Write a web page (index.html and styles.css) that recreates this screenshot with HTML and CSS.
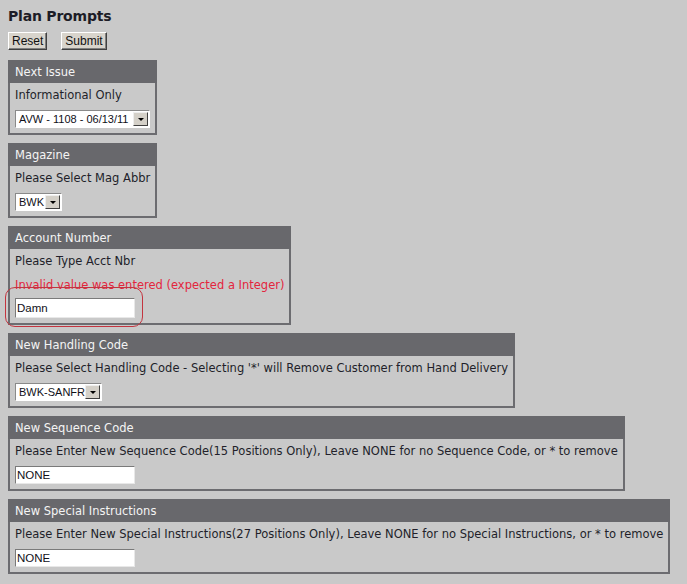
FILE: index.html
```html
<!DOCTYPE html>
<html>
<head>
<meta charset="utf-8">
<title>Plan Prompts</title>
<link rel="stylesheet" href="styles.css">
</head>
<body>
<h1 class="title">Plan Prompts</h1>
<div class="actions">
  <button class="btn" type="button">Reset</button>
  <button class="btn" type="button">Submit</button>
</div>
<div class="panels">
  <div class="panel">
    <div class="panel-head">Next Issue</div>
    <div class="panel-body">
      <div class="prompt">Informational Only</div>
      <div class="select w-issue"><span class="select-value">AVW - 1108 - 06/13/11</span><span class="select-btn"><span class="arrow"></span></span></div>
    </div>
  </div>
  <div class="panel">
    <div class="panel-head">Magazine</div>
    <div class="panel-body">
      <div class="prompt">Please Select Mag Abbr</div>
      <div class="select w-mag"><span class="select-value">BWK</span><span class="select-btn"><span class="arrow"></span></span></div>
    </div>
  </div>
  <div class="panel panel-error">
    <div class="panel-head">Account Number</div>
    <div class="panel-body">
      <div class="prompt">Please Type Acct Nbr</div>
      <div class="error">Invalid value was entered (expected a Integer)</div>
      <input class="field field-tall" type="text" value="Damn">
    </div>
    <div class="highlight"></div>
  </div>
  <div class="panel">
    <div class="panel-head">New Handling Code</div>
    <div class="panel-body">
      <div class="prompt">Please Select Handling Code - Selecting '*' will Remove Customer from Hand Delivery</div>
      <div class="select w-hand"><span class="select-value">BWK-SANFR</span><span class="select-btn"><span class="arrow"></span></span></div>
    </div>
  </div>
  <div class="panel">
    <div class="panel-head">New Sequence Code</div>
    <div class="panel-body">
      <div class="prompt">Please Enter New Sequence Code(15 Positions Only), Leave NONE for no Sequence Code, or * to remove</div>
      <input class="field" type="text" value="NONE">
    </div>
  </div>
  <div class="panel">
    <div class="panel-head">New Special Instructions</div>
    <div class="panel-body">
      <div class="prompt">Please Enter New Special Instructions(27 Positions Only), Leave NONE for no Special Instructions, or * to remove</div>
      <input class="field" type="text" value="NONE">
    </div>
  </div>
</div>
</body>
</html>
```

FILE: styles.css
```css
html, body {
  margin: 0;
  background: #c9c9c9;
}
body {
  padding: 7px 8px 8px 8px;
  font-family: "DejaVu Sans", Verdana, sans-serif;
  font-size: 11.5px;
  color: #221f2a;
}
.title {
  margin: 0;
  font-size: 14px;
  letter-spacing: -0.2px;
  line-height: 18px;
  font-weight: bold;
  color: #1c1c26;
}
.actions {
  display: flex;
  gap: 14px;
  margin-top: 7px;
}
.btn {
  font-family: "Liberation Sans", Arial, sans-serif;
  font-size: 12px;
  height: 18px;
  padding: 0 3px;
  margin: 0;
  line-height: 14px;
  color: #111;
  background: #d8d4cc;
  border: 1px solid;
  border-color: #ffffff #404040 #404040 #ffffff;
  box-shadow: inset -1px -1px 0 #808080;
}
.panels {
  display: flex;
  flex-direction: column;
  align-items: flex-start;
  gap: 8px;
  margin-top: 10px;
}
.panel {
  position: relative;
  border: 2px solid #6c6c70;
  border-top: 0;
}
.panel-head {
  background: #68686c;
  color: #f4f4f4;
  height: 23px;
  line-height: 24px;
  margin: 0 -2px;
  padding: 0 7px;
  white-space: nowrap;
}
.panel-body {
  padding: 4px 5px 5px 5px;
}
.prompt {
  line-height: 16px;
  white-space: nowrap;
}
.error {
  margin-top: 8px;
  line-height: 16px;
  color: #e3253d;
  white-space: nowrap;
}
.select {
  margin-top: 7px;
  display: flex;
  align-items: center;
  height: 18px;
  box-sizing: border-box;
  background: #fff;
  border: 1px solid;
  border-color: #8a8a8a #ffffff #ffffff #8a8a8a;
  font-family: "Liberation Sans", Arial, sans-serif;
  font-size: 11px;
  color: #101018;
  padding: 0 1px 0 3px;
}
.select-value {
  flex: 1;
  white-space: nowrap;
  line-height: 16px;
}
.select-btn {
  width: 15px;
  height: 14px;
  box-sizing: border-box;
  background: #d4d0c8;
  border: 1px solid;
  border-color: #eeeeee #404040 #404040 #eeeeee;
  display: flex;
  align-items: center;
  justify-content: center;
}
.arrow {
  width: 0;
  height: 0;
  border-left: 3px solid transparent;
  border-right: 3px solid transparent;
  border-top: 3px solid #000;
}
.w-issue { width: 135px; }
.w-mag { width: 47px; }
.w-hand { width: 87px; }
.field {
  display: block;
  margin-top: 7px;
  width: 120px;
  height: 18px;
  box-sizing: border-box;
  padding: 0 1px;
  border: 1px solid;
  border-color: #7a7a7a #e8e8e8 #e8e8e8 #7a7a7a;
  background: #fff;
  font-family: "Liberation Sans", Arial, sans-serif;
  font-size: 11.5px;
  color: #101018;
  outline: none;
}
.field-tall {
  margin-top: 5px;
  height: 20px;
}
.highlight {
  position: absolute;
  left: -5px;
  top: 61px;
  width: 138px;
  height: 40px;
  box-sizing: border-box;
  border: 1.5px solid #c3343f;
  border-radius: 10px;
  pointer-events: none;
}
```
